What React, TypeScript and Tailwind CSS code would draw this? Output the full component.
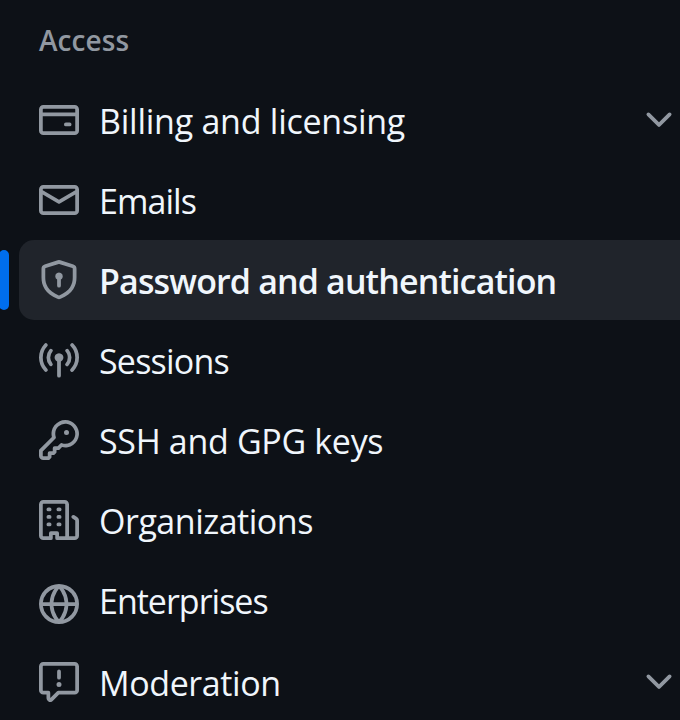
type Item = {
  label: string;
  path: string;
  tracking: string;
  row?: string;
  iconShift?: string;
  active?: boolean;
  expandable?: boolean;
};

const chevron =
  "M12.78 5.22a.749.749 0 0 1 0 1.06l-4.25 4.25a.749.749 0 0 1-1.06 0L3.22 6.28a.749.749 0 1 1 1.06-1.06L8 8.939l3.72-3.719a.749.749 0 0 1 1.06 0Z";

const items: Item[] = [
  {
    label: "Billing and licensing",
    tracking: "tracking-[-0.25px]",
    expandable: true,
    path: "M10.75 9a.75.75 0 0 0 0 1.5h1.5a.75.75 0 0 0 0-1.5h-1.5ZM0 3.75C0 2.784.784 2 1.75 2h12.5c.966 0 1.75.784 1.75 1.75v8.5A1.75 1.75 0 0 1 14.25 14H1.75A1.75 1.75 0 0 1 0 12.25ZM14.5 6.5h-13v5.75c0 .138.112.25.25.25h12.5a.25.25 0 0 0 .25-.25Zm0-2.75a.25.25 0 0 0-.25-.25H1.75a.25.25 0 0 0-.25.25V5h13Z",
  },
  {
    label: "Emails",
    tracking: "tracking-[-0.95px]",
    path: "M1.75 2h12.5c.966 0 1.75.784 1.75 1.75v8.5A1.75 1.75 0 0 1 14.25 14H1.75A1.75 1.75 0 0 1 0 12.25v-8.5C0 2.784.784 2 1.75 2ZM1.5 12.251c0 .138.112.25.25.25h12.5a.25.25 0 0 0 .25-.25V5.809L8.38 9.397a.75.75 0 0 1-.76 0L1.5 5.809v6.442Zm13-8.181v-.32a.25.25 0 0 0-.25-.25H1.75a.25.25 0 0 0-.25.25v.32L8 7.88Z",
  },
  {
    label: "Password and authentication",
    tracking: "tracking-[-0.86px]",
    active: true,
    path: "m8.533.133 5.25 1.68A1.75 1.75 0 0 1 15 3.48V7c0 1.566-.32 3.182-1.303 4.682-.983 1.498-2.585 2.813-5.032 3.855a1.697 1.697 0 0 1-1.33 0c-2.447-1.042-4.049-2.357-5.032-3.855C1.32 10.182 1 8.566 1 7V3.48a1.755 1.755 0 0 1 1.217-1.667l5.25-1.68a1.748 1.748 0 0 1 1.066 0Zm-.61 1.429.001.001-5.25 1.68a.251.251 0 0 0-.174.237V7c0 1.36.275 2.666 1.057 3.859.784 1.194 2.121 2.342 4.366 3.298a.196.196 0 0 0 .154 0c2.245-.957 3.582-2.103 4.366-3.297C13.225 9.666 13.5 8.358 13.5 7V3.48a.25.25 0 0 0-.174-.238l-5.25-1.68a.25.25 0 0 0-.153 0ZM9.5 6.5c0 .536-.286 1.032-.75 1.3v2.45a.75.75 0 0 1-1.5 0V7.8A1.5 1.5 0 1 1 9.5 6.5Z",
  },
  {
    label: "Sessions",
    tracking: "tracking-[-0.8px]",
    path: "M8.75 8.582v5.668a.75.75 0 0 1-1.5 0V8.582a1.75 1.75 0 1 1 1.5 0Zm3.983-7.125a.75.75 0 0 1 1.06.026A7.976 7.976 0 0 1 16 7c0 2.139-.84 4.083-2.207 5.517a.75.75 0 1 1-1.086-1.034A6.474 6.474 0 0 0 14.5 7a6.474 6.474 0 0 0-1.793-4.483.75.75 0 0 1 .026-1.06Zm-9.466 0c.3.286.312.76.026 1.06A6.474 6.474 0 0 0 1.5 7a6.47 6.47 0 0 0 1.793 4.483.75.75 0 0 1-1.086 1.034A7.973 7.973 0 0 1 0 7c0-2.139.84-4.083 2.207-5.517a.75.75 0 0 1 1.06-.026Zm8.556 2.321A4.988 4.988 0 0 1 13 7a4.988 4.988 0 0 1-1.177 3.222.75.75 0 1 1-1.146-.967A3.487 3.487 0 0 0 11.5 7c0-.86-.309-1.645-.823-2.255a.75.75 0 0 1 1.146-.967Zm-6.492.958A3.48 3.48 0 0 0 4.5 7a3.48 3.48 0 0 0 .823 2.255.75.75 0 0 1-1.146.967A4.981 4.981 0 0 1 3 7a4.982 4.982 0 0 1 1.188-3.236.75.75 0 1 1 1.143.972Z",
  },
  {
    label: "SSH and GPG keys",
    tracking: "tracking-[-0.33px]",
    path: "M10.5 0a5.499 5.499 0 1 1-1.288 10.848l-.932.932a.749.749 0 0 1-.53.22H7v.75a.749.749 0 0 1-.22.53l-.5.5a.749.749 0 0 1-.53.22H5v.75a.749.749 0 0 1-.22.53l-.5.5a.749.749 0 0 1-.53.22h-2A1.75 1.75 0 0 1 0 14.25v-2c0-.199.079-.389.22-.53l4.932-4.932A5.5 5.5 0 0 1 10.5 0Zm-4 5.5c-.001.431.069.86.205 1.269a.75.75 0 0 1-.181.768L1.5 12.56v1.69c0 .138.112.25.25.25h1.69l.06-.06v-1.19a.75.75 0 0 1 .75-.75h1.19l.06-.06v-1.19a.75.75 0 0 1 .75-.75h1.19l1.023-1.025a.75.75 0 0 1 .768-.18A4 4 0 1 0 6.5 5.5ZM11 6a1 1 0 1 1 0-2 1 1 0 0 1 0 2Z",
  },
  {
    label: "Organizations",
    tracking: "tracking-[-0.48px]",
    path: "M1.75 16A1.75 1.75 0 0 1 0 14.25V1.75C0 .784.784 0 1.75 0h8.5C11.216 0 12 .784 12 1.75v12.5c0 .085-.006.168-.018.25h2.268a.25.25 0 0 0 .25-.25V8.285a.25.25 0 0 0-.111-.208l-1.055-.703a.749.749 0 1 1 .832-1.248l1.055.703c.487.325.779.871.779 1.456v5.965A1.75 1.75 0 0 1 14.25 16h-3.5a.766.766 0 0 1-.197-.026c-.099.017-.2.026-.303.026h-3a.75.75 0 0 1-.75-.75V14h-1v1.25a.75.75 0 0 1-.75.75Zm-.25-1.75c0 .138.112.25.25.25H4v-1.25a.75.75 0 0 1 .75-.75h2.5a.75.75 0 0 1 .75.75v1.25h2.25a.25.25 0 0 0 .25-.25V1.75a.25.25 0 0 0-.25-.25h-8.5a.25.25 0 0 0-.25.25ZM3.75 6h.5a.75.75 0 0 1 0 1.5h-.5a.75.75 0 0 1 0-1.5ZM3 3.75A.75.75 0 0 1 3.75 3h.5a.75.75 0 0 1 0 1.5h-.5A.75.75 0 0 1 3 3.75Zm4 3A.75.75 0 0 1 7.75 6h.5a.75.75 0 0 1 0 1.5h-.5A.75.75 0 0 1 7 6.75ZM7.75 3h.5a.75.75 0 0 1 0 1.5h-.5a.75.75 0 0 1 0-1.5ZM3 9.75A.75.75 0 0 1 3.75 9h.5a.75.75 0 0 1 0 1.5h-.5A.75.75 0 0 1 3 9.75ZM7.75 9h.5a.75.75 0 0 1 0 1.5h-.5a.75.75 0 0 1 0-1.5Z",
  },
  {
    label: "Enterprises",
    tracking: "tracking-[-1px]",
    row: "h-[82px]",
    iconShift: "mt-6",
    path: "M8 0a8 8 0 1 1 0 16A8 8 0 0 1 8 0ZM5.78 8.75a9.64 9.64 0 0 0 1.363 4.177c.255.426.542.832.857 1.215.245-.296.551-.705.857-1.215A9.64 9.64 0 0 0 10.22 8.75Zm4.44-1.5a9.64 9.64 0 0 0-1.363-4.177c-.307-.51-.612-.919-.857-1.215a9.927 9.927 0 0 0-.857 1.215A9.64 9.64 0 0 0 5.78 7.25Zm-5.944 1.5H1.543a6.507 6.507 0 0 0 4.666 5.5c-.123-.181-.24-.365-.352-.552-.715-1.192-1.437-2.874-1.581-4.948Zm-2.733-1.5h2.733c.144-2.074.866-3.756 1.58-4.948.12-.197.237-.381.353-.552a6.507 6.507 0 0 0-4.666 5.5Zm10.181 1.5c-.144 2.074-.866 3.756-1.58 4.948-.12.197-.237.381-.353.552a6.507 6.507 0 0 0 4.666-5.5Zm2.733-1.5a6.507 6.507 0 0 0-4.666-5.5c.123.181.24.365.353.552.714 1.192 1.436 2.874 1.58 4.948Z",
  },
  {
    label: "Moderation",
    tracking: "tracking-[-0.4px]",
    row: "h-[78px]",
    expandable: true,
    path: "M0 1.75C0 .784.784 0 1.75 0h12.5C15.216 0 16 .784 16 1.75v9.5A1.75 1.75 0 0 1 14.25 13H8.06l-2.573 2.573A1.458 1.458 0 0 1 3 14.543V13H1.75A1.75 1.75 0 0 1 0 11.25Zm1.75-.25a.25.25 0 0 0-.25.25v9.5c0 .138.112.25.25.25h2a.75.75 0 0 1 .75.75v2.19l2.72-2.72a.749.749 0 0 1 .53-.22h6.5a.25.25 0 0 0 .25-.25v-9.5a.25.25 0 0 0-.25-.25Zm7 2.25v2.5a.75.75 0 0 1-1.5 0v-2.5a.75.75 0 0 1 1.5 0ZM9 9a1 1 0 1 1-2 0 1 1 0 0 1 2 0Z",
  },
];

function Icon({ d, className }: { d: string; className: string }) {
  return (
    <svg viewBox="0 0 16 16" className={`size-10 shrink-0 fill-[#9198a1] ${className}`} aria-hidden="true">
      <path d={d} />
    </svg>
  );
}

function NavItem({ item }: { item: Item }) {
  return (
    <li className={`relative flex ${item.row ?? "h-20"}`}>
      {item.active && <span className="absolute top-2.5 -left-px h-15 w-2.5 rounded-full bg-[#006eed]" />}
      <a
        className={`ml-[19px] flex w-full items-start pl-5 ${
          item.active ? "rounded-l-[15px] bg-[#20242b] font-semibold" : ""
        }`}
      >
        <Icon d={item.path} className={item.iconShift ?? "mt-5"} />
        <span className={`mt-4 ml-5 grow text-[34px] leading-[50px] whitespace-nowrap text-[#f0f6fc] ${item.tracking}`}>
          {item.label}
        </span>
        {item.expandable && <Icon d={chevron} className="mt-5 mr-px" />}
      </a>
    </li>
  );
}

export default function App() {
  return (
    <nav className="h-[720px] w-[680px] overflow-hidden bg-[#0d1117] font-['Open_Sans','Noto_Sans',sans-serif]">
      <h3 className="h-20 pt-5 pl-[39px] text-[28px] leading-10 font-semibold tracking-[0.1px] text-[#9198a1]">Access</h3>
      <ul>
        {items.map((item) => (
          <NavItem key={item.label} item={item} />
        ))}
      </ul>
    </nav>
  );
}
